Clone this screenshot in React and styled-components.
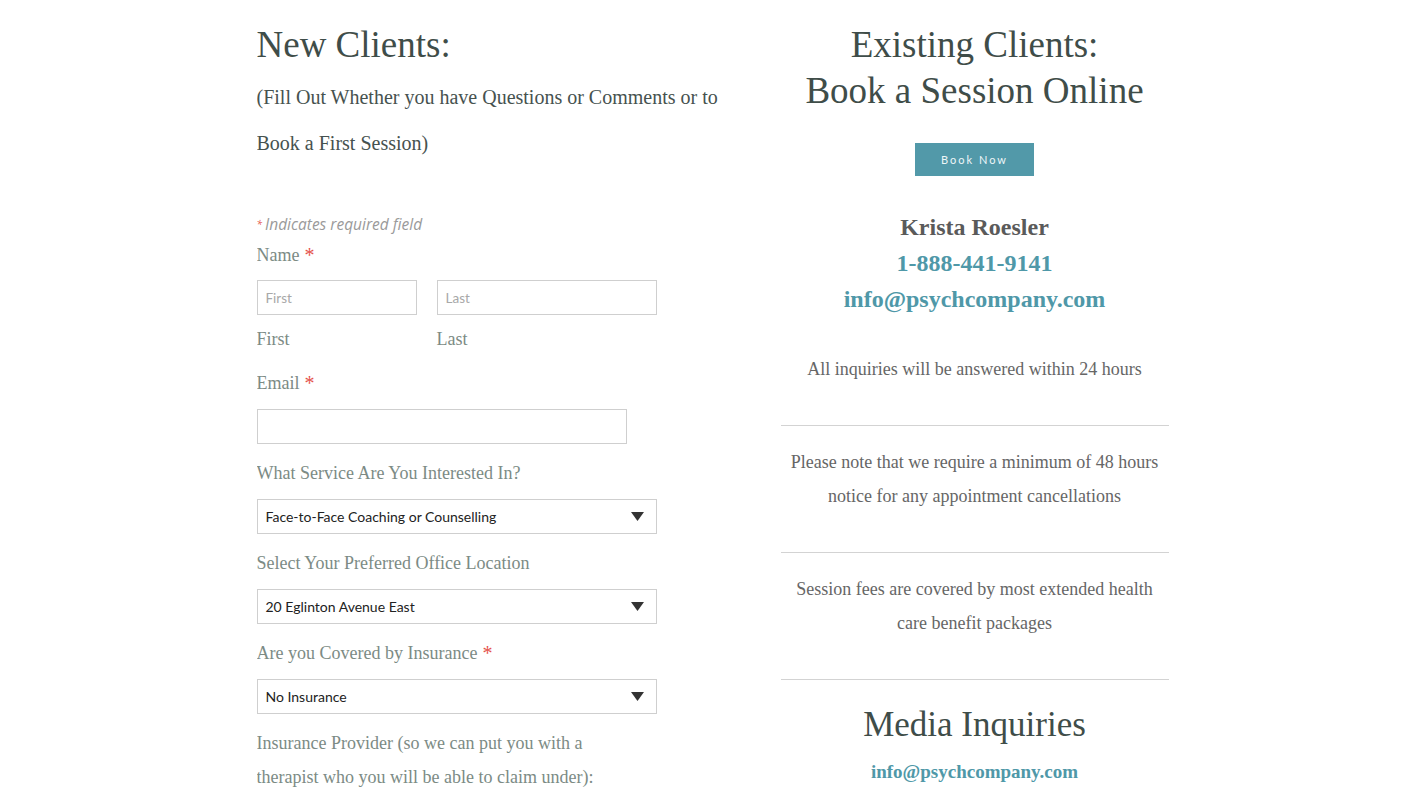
import React from 'react';
import styled, { createGlobalStyle } from 'styled-components';

const GlobalStyle = createGlobalStyle`
  body {
    margin: 0;
    background: #fff;
    font-family: "Liberation Serif", serif;
  }
`;

const teal = '#4f98a8';

const Page = styled.div`
  display: grid;
  grid-template-columns: 460px 388px;
  column-gap: 64px;
  width: 912px;
  margin: 0 auto;
  height: 789px;
  overflow: hidden;
`;

const LeftCol = styled.div`
  display: flex;
  flex-direction: column;
  padding-top: 22px;
`;

const RightCol = styled.div`
  display: flex;
  flex-direction: column;
  align-items: center;
  text-align: center;
  padding-top: 22px;
`;

const Heading = styled.h1`
  margin: 0;
  font-family: "Liberation Serif", serif;
  font-weight: 400;
  font-size: ${(p) => p.size || 37}px;
  line-height: 46px;
  color: #3f4d49;
`;

const SubHeading = styled.h2`
  margin: 6px 0 0;
  font-family: "Liberation Serif", serif;
  font-weight: 400;
  font-size: 20px;
  line-height: 46px;
  color: #46524f;
  width: 470px;
`;

const RequiredNote = styled.div`
  margin-top: 48px;
  font-family: "Open Sans", sans-serif;
  font-style: italic;
  font-size: 15.5px;
  line-height: 20px;
  color: #9a9a9a;
`;

const SmallStar = styled.span`
  color: #e5534b;
  font-size: 10px;
  vertical-align: top;
  margin-right: 3px;
`;

const Star = styled.span`
  color: #e5534b;
  font-size: 20px;
  margin-left: 5px;
  vertical-align: -1px;
`;

const Field = styled.div`
  display: flex;
  flex-direction: column;
  margin-top: ${(p) => p.top ?? 17}px;
`;

const Label = styled.label`
  font-family: "Liberation Serif", serif;
  font-size: 18px;
  line-height: ${(p) => p.lh || 24}px;
  color: #7c8b85;
  margin-bottom: ${(p) => p.gap ?? 14}px;
`;

const NameRow = styled.div`
  display: flex;
  gap: 20px;
`;

const NameCell = styled.div`
  display: flex;
  flex-direction: column;
  width: ${(p) => p.w}px;
  gap: 12px;
`;

const TextInput = styled.input`
  box-sizing: border-box;
  width: ${(p) => p.w || 400}px;
  height: 35px;
  border: 1px solid #cfcfcf;
  padding: 0 8px;
  font-family: Lato, sans-serif;
  font-size: 13.5px;
  color: #333;
  background: #fff;
  outline: none;
  &::placeholder {
    color: #a8a8a8;
  }
`;

const SelectBox = styled.div`
  box-sizing: border-box;
  width: 400px;
  height: 35px;
  border: 1px solid #cfcfcf;
  padding: 0 12px 0 8px;
  display: flex;
  align-items: center;
  justify-content: space-between;
  font-family: Lato, sans-serif;
  font-size: 14px;
  color: #222;
`;

const Arrow = () => (
  <svg width="13" height="9" viewBox="0 0 13 9">
    <polygon points="0,0 13,0 6.5,9" fill="#333" />
  </svg>
);

const Select = ({ value }) => (
  <SelectBox>
    <span>{value}</span>
    <Arrow />
  </SelectBox>
);

const BookButton = styled.button`
  margin-top: 29px;
  width: 119px;
  height: 33px;
  border: none;
  background: #5299a9;
  color: #eef6f8;
  font-family: Lato, sans-serif;
  font-size: 11px;
  letter-spacing: 2px;
  cursor: pointer;
`;

const Contact = styled.div`
  margin-top: 33px;
  display: flex;
  flex-direction: column;
  font-family: "Liberation Serif", serif;
  font-weight: 700;
  font-size: 24px;
  line-height: 36px;
`;

const ContactName = styled.span`
  color: #5a5a5a;
`;

const ContactLink = styled.a`
  color: ${teal};
  text-decoration: none;
  font-size: ${(p) => p.size || 24}px;
  line-height: ${(p) => p.lh || 36}px;
  font-weight: 700;
  font-family: "Liberation Serif", serif;
`;

const Notice = styled.p`
  margin: 0;
  width: 388px;
  box-sizing: border-box;
  padding: ${(p) => (p.first ? '35px 0 39px' : '19px 0 39px')};
  border-top: ${(p) => (p.first ? 'none' : '1px solid #d3d3d3')};
  font-family: "Liberation Serif", serif;
  font-size: 18px;
  line-height: 34px;
  color: #666;
`;

const MediaBlock = styled.div`
  width: 388px;
  border-top: 1px solid #d3d3d3;
  padding-top: 22px;
  display: flex;
  flex-direction: column;
  align-items: center;
  gap: 9px;
`;

export default function App() {
  return (
    <>
      <GlobalStyle />
      <Page>
        <LeftCol>
          <Heading>New Clients:</Heading>
          <SubHeading>
            (Fill Out Whether you have Questions or Comments or to Book a First Session)
          </SubHeading>
          <RequiredNote>
            <SmallStar>*</SmallStar>Indicates required field
          </RequiredNote>
          <Field top={9}>
            <Label gap={13}>Name<Star>*</Star></Label>
            <NameRow>
              <NameCell w={160}>
                <TextInput w={160} placeholder="First" />
                <Label gap={0}>First</Label>
              </NameCell>
              <NameCell w={220}>
                <TextInput w={220} placeholder="Last" />
                <Label gap={0}>Last</Label>
              </NameCell>
            </NameRow>
          </Field>
          <Field top={20}>
            <Label>Email<Star>*</Star></Label>
            <TextInput w={370} />
          </Field>
          <Field>
            <Label>What Service Are You Interested In?</Label>
            <Select value="Face-to-Face Coaching or Counselling" />
          </Field>
          <Field>
            <Label>Select Your Preferred Office Location</Label>
            <Select value="20 Eglinton Avenue East" />
          </Field>
          <Field>
            <Label>Are you Covered by Insurance<Star>*</Star></Label>
            <Select value="No Insurance" />
          </Field>
          <Field top={12}>
            <Label lh={34} gap={0}>
              Insurance Provider (so we can put you with a<br />
              therapist who you will be able to claim under):
            </Label>
          </Field>
        </LeftCol>
        <RightCol>
          <Heading>
            Existing Clients:<br />Book a Session Online
          </Heading>
          <BookButton>Book Now</BookButton>
          <Contact>
            <ContactName>Krista Roesler</ContactName>
            <ContactLink href="#">1-888-441-9141</ContactLink>
            <ContactLink href="#">info@psychcompany.com</ContactLink>
          </Contact>
          <Notice first>All inquiries will be answered within 24 hours</Notice>
          <Notice>Please note that we require a minimum of 48 hours notice for any appointment cancellations</Notice>
          <Notice>Session fees are covered by most extended health care benefit packages</Notice>
          <MediaBlock>
            <Heading size={35}>Media Inquiries</Heading>
            <ContactLink href="#" size={19} lh={30}>info@psychcompany.com</ContactLink>
          </MediaBlock>
        </RightCol>
      </Page>
    </>
  );
}
